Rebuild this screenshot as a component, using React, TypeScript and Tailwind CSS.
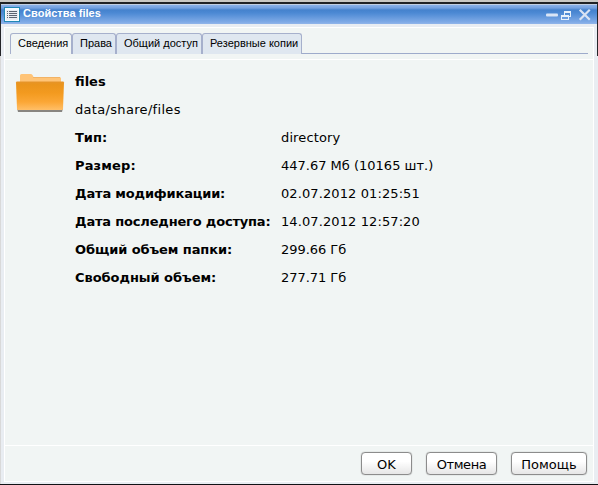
import React from 'react';

const tabs = [
  { label: 'Сведения', box: 'w-[62px] bg-[#f1f5f4]', text: 'w-[50px]' },
  { label: 'Права', box: 'w-[44px] bg-[#dfe7f0]', text: 'w-[32px]' },
  { label: 'Общий доступ', box: 'w-[86px] bg-[#dfe7f0]', text: 'w-[74px]' },
  { label: 'Резервные копии', box: 'w-[100px] bg-[#dfe7f0]', text: 'w-[88px]' },
];

const details = [
  { name: 'Тип:', value: 'directory', nameSpacing: 'tracking-normal', valueSpacing: 'tracking-[0.13px]' },
  { name: 'Размер:', value: '447.67 Мб (10165 шт.)', nameSpacing: 'tracking-[0.15px]', valueSpacing: 'tracking-normal' },
  { name: 'Дата модификации:', value: '02.07.2012 01:25:51', nameSpacing: 'tracking-[-0.17px]', valueSpacing: 'tracking-[0.1px]' },
  { name: 'Дата последнего доступа:', value: '14.07.2012 12:57:20', nameSpacing: 'tracking-[-0.18px]', valueSpacing: 'tracking-[0.1px]' },
  { name: 'Общий объем папки:', value: '299.66 Гб', nameSpacing: 'tracking-[-0.10px]', valueSpacing: 'tracking-[-0.05px]' },
  { name: 'Свободный объем:', value: '277.71 Гб', nameSpacing: 'tracking-[-0.05px]', valueSpacing: 'tracking-[-0.05px]' },
];

const buttons = [
  { label: 'OK', width: 'w-[51px]' },
  { label: 'Отмена', width: 'w-[71px] tracking-[-0.4px]' },
  { label: 'Помощь', width: 'w-[76px]' },
];

function FormIcon() {
  return (
    <svg className="mt-px" width="16" height="15" viewBox="0 0 16 15" shapeRendering="crispEdges">
      <rect width="16" height="15" fill="#2188b5" />
      <rect x="1" y="1" width="14" height="13" fill="#f5fbff" />
      <rect x="2" y="3" width="12" height="10" fill="#e9edf2" />
      {[4, 6, 8, 10].map((y) => (
        <g key={y} fill="#5b6472">
          <rect x="3" y={y} width="1" height="1" />
          <rect x="5" y={y} width="8" height="1" />
        </g>
      ))}
    </svg>
  );
}

function WindowControls() {
  return (
    <svg className="mt-[2px]" width="48" height="16" viewBox="0 0 48 16">
      <rect x="1" y="6.500" width="12" height="3" rx="1" fill="#d9e5f6" />
      <g fill="none" stroke="#e5f0fb" shapeRendering="crispEdges">
        <path d="M19 4.500h7M19.500 4v4M25.500 4v6M23 9.500h3M19 5.500h7" />
        <path d="M16 8.500h8M16.500 8v5M23.500 8v5M16 12.500h8M16 9.500h8" />
      </g>
      <path d="M35.500 3.500l8.500 8.500M44 3.500l-8.500 8.500" stroke="#d9e3f3" strokeWidth="2.200" strokeLinecap="square" />
    </svg>
  );
}

function FolderIcon() {
  return (
    <svg width="50" height="42" viewBox="0 0 50 42">
      <defs>
        <linearGradient id="folder-front" x1="0" y1="0" x2="0" y2="1">
          <stop offset="0" stopColor="#e5942b" />
          <stop offset="0.100" stopColor="#ea941c" />
          <stop offset="0.400" stopColor="#f39a1f" />
          <stop offset="0.720" stopColor="#fba736" />
          <stop offset="1" stopColor="#ffbf68" />
        </linearGradient>
      </defs>
      <path d="M2 36h46l-1 4H3z" fill="#888580" />
      <path d="M5 11V3.500Q5 2 6.500 2h9q1.500 0 2 1l1 2h26q1.500 0 1.500 1.500V11z" fill="#ffc477" />
      <path d="M18 5.500h27" stroke="#f2b365" />
      <path d="M1 10.500q0-1 1-1h46q1 0 1 1L48 37q-.1 1-1 1H3q-.9 0-1-1z" fill="url(#folder-front)" />
    </svg>
  );
}

export default function App() {
  return (
    <div className="flex h-[485px] w-[598px] flex-col overflow-hidden border-b border-[#111215] bg-[#e9edf2] text-black">
      <div className="h-[2px] shrink-0 bg-[#c9c8c4]" />
      <div className="h-[2px] shrink-0 bg-[#202225]" />
      <div className="flex min-h-0 grow">
        <div className="w-px shrink-0 bg-linear-to-b from-[#252629] from-[52px] to-[#d9d9d9] to-[52px]" />
        <div className="flex min-w-0 grow flex-col">
          <header className="flex h-5 shrink-0 items-center bg-[linear-gradient(to_bottom,#c1cee2_0px,#c1cee2_1px,#8bb2e9_1px,#73a0df_4px,#4582cd_6px,#4c89d4_9px,#7faae6_18px,#91b5ea_20px)] pr-[4px] pl-[3px]">
            <FormIcon />
            <h1 className="ml-[3px] grow pb-[2px] font-['Liberation_Sans',Arial,sans-serif] text-[11px] leading-[14px] font-bold text-white">
              <span className="tracking-[0.040px]">Свойства files</span>
            </h1>
            <WindowControls />
          </header>
          <main className="mx-[3px] mt-[3px] mb-[2px] flex min-h-0 grow flex-col border border-white bg-[#f1f5f4]">
            <nav className="flex h-[32px] shrink-0 items-end border-b border-white pr-[5px] pb-[5px] pl-[5px] font-['Liberation_Sans',Arial,sans-serif] text-[11px]">
              {tabs.map((tab) => (
                <button
                  key={tab.label}
                  className={`h-[21px] shrink-0 rounded-t-[3px] border border-b-0 border-[#a6b0cc] pb-px pl-[7px] text-left leading-[19px] whitespace-nowrap ${tab.box}`}
                >
                  <span className={`inline-block ${tab.text}`}>{tab.label}</span>
                </button>
              ))}
              <div className="h-px grow bg-[#9eabcb]" />
            </nav>
            <section className="flex min-h-0 grow border-b border-white pt-[8px] pl-[10px] font-['DejaVu_Sans',Verdana,sans-serif] text-[13px]">
              <div className="w-[60px] shrink-0 pt-[4px]">
                <FolderIcon />
              </div>
              <div>
                <h2 className="h-7 leading-7 font-bold">files</h2>
                <p className="h-7 leading-7 tracking-[0.32px]">data/share/files</p>
                <dl className="grid grid-cols-[206px_auto]">
                  {details.map((row) => (
                    <React.Fragment key={row.name}>
                      <dt className={`h-7 leading-7 font-bold whitespace-nowrap ${row.nameSpacing}`}>{row.name}</dt>
                      <dd className={`h-7 leading-7 whitespace-nowrap ${row.valueSpacing}`}>{row.value}</dd>
                    </React.Fragment>
                  ))}
                </dl>
              </div>
            </section>
            <footer className="flex h-[35px] shrink-0 items-start justify-end gap-[14px] pt-[6px] pr-[6px] font-['DejaVu_Sans',Verdana,sans-serif] text-[13px]">
              {buttons.map((button) => (
                <button
                  key={button.label}
                  className={`h-[23px] rounded-[4px] border border-[#8c8c8c] bg-linear-to-b from-white from-40% to-[#e6e6e6] text-center leading-[23px] shadow-[0_0_1px_#858585] ${button.width}`}
                >
                  {button.label}
                </button>
              ))}
            </footer>
          </main>
        </div>
        <div className="w-px shrink-0 bg-linear-to-b from-[#252629] from-[52px] to-[#e9edf2] to-[52px]" />
      </div>
    </div>
  );
}
